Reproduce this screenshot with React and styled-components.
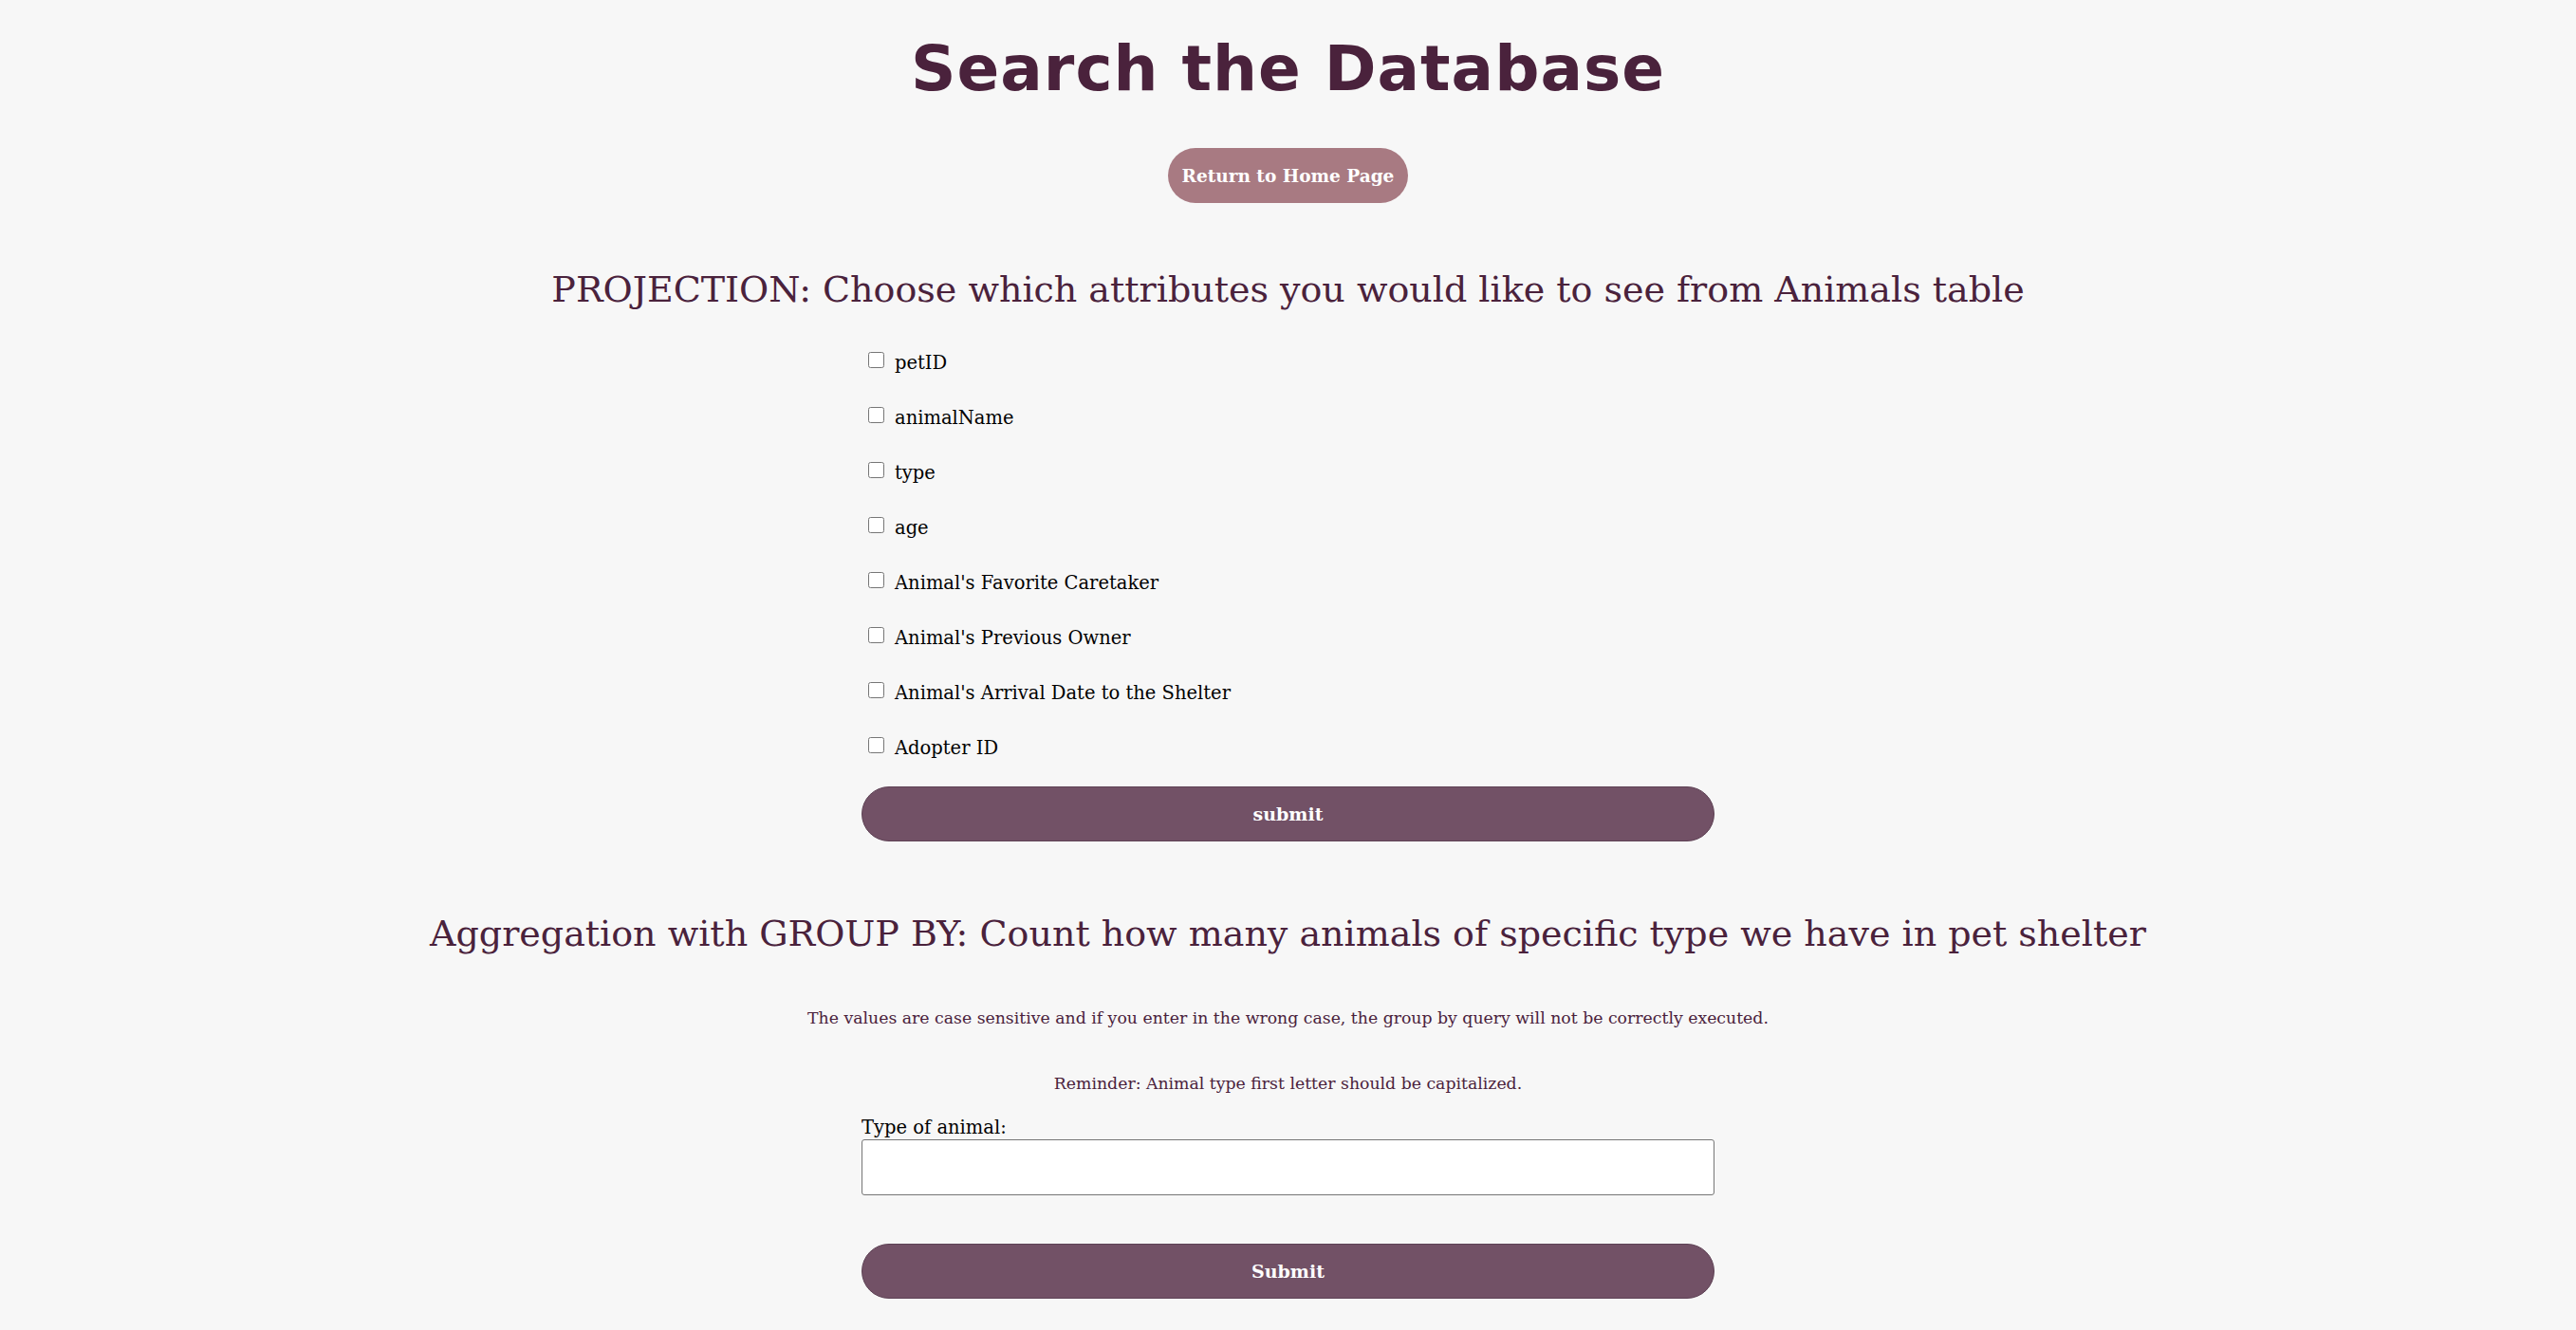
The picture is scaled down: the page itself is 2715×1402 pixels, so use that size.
import styled, { createGlobalStyle } from "styled-components";

const GlobalStyle = createGlobalStyle`
    body {
        margin: 0;
        background-color: #f7f7f7;
        font-family: "DejaVu Serif", "Liberation Serif", serif;
    }
`;

const PageStyle = styled.main`
    display: flex;
    flex-direction: column;
    align-items: center;
    padding-top: 33px;
    padding-bottom: 40px;
`;

const TitleStyle = styled.h1`
    margin: 0;
    font-family: "DejaVu Sans", "Liberation Sans", sans-serif;
    font-weight: 900;
    font-size: 66px;
    line-height: 80px;
    color: #4a223c;
    letter-spacing: 1px;
`;

const HomeButtonStyle = styled.button`
    margin-top: 43px;
    height: 58px;
    padding: 0 15px;
    border: none;
    border-radius: 29px;
    background-color: #a87a82;
    color: white;
    font-family: "DejaVu Serif", serif;
    font-weight: bold;
    font-size: 18.5px;
`;

const SectionTitleStyle = styled.h2`
    margin: ${(props) => props.$top}px 0 0;
    font-weight: normal;
    font-size: 38px;
    line-height: 48px;
    color: #4a223c;
`;

const FormStyle = styled.form`
    width: 899px;
    display: flex;
    flex-direction: column;
    margin-top: ${(props) => props.$top}px;
`;

const CheckRowStyle = styled.label`
    display: flex;
    align-items: center;
    gap: 11px;
    height: 58px;
    padding-left: 7px;
    font-size: 19.5px;
    color: #000;
`;

const CheckBoxStyle = styled.input`
    width: 17px;
    height: 17px;
    margin: 0 0 6px;
`;

const SubmitStyle = styled.button`
    height: 58px;
    margin-top: ${(props) => props.$top}px;
    border: 1px solid #5e4255;
    border-radius: 29px;
    background-color: #725166;
    color: white;
    font-family: "DejaVu Serif", serif;
    font-weight: bold;
    font-size: 19px;
`;

const NoteStyle = styled.p`
    margin: ${(props) => props.$top}px 0 0;
    font-size: 17.3px;
    line-height: 24px;
    color: #4a223c;
`;

const FieldLabelStyle = styled.label`
    font-size: 19.5px;
    line-height: 24px;
    color: #000;
`;

const TextInputStyle = styled.input`
    height: 59px;
    box-sizing: border-box;
    border: 1px solid #767676;
    border-radius: 3px;
    background: white;
    font-size: 20px;
`;

const attributes = [
    "petID",
    "animalName",
    "type",
    "age",
    "Animal's Favorite Caretaker",
    "Animal's Previous Owner",
    "Animal's Arrival Date to the Shelter",
    "Adopter ID",
];

function App() {
    return (
        <>
            <GlobalStyle />
            <PageStyle>
                <TitleStyle>Search the Database</TitleStyle>
                <HomeButtonStyle>Return to Home Page</HomeButtonStyle>

                <SectionTitleStyle $top={67}>
                    PROJECTION: Choose which attributes you would like to see from Animals table
                </SectionTitleStyle>
                <FormStyle $top={24}>
                    {attributes.map((name) => (
                        <CheckRowStyle key={name}>
                            <CheckBoxStyle type="checkbox" />
                            {name}
                        </CheckRowStyle>
                    ))}
                    <SubmitStyle $top={12}>submit</SubmitStyle>
                </FormStyle>

                <SectionTitleStyle $top={73}>
                    Aggregation with GROUP BY: Count how many animals of specific type we have in pet shelter
                </SectionTitleStyle>
                <NoteStyle $top={53}>
                    The values are case sensitive and if you enter in the wrong case, the group by query will not be correctly executed.
                </NoteStyle>
                <NoteStyle $top={45}>
                    Reminder: Animal type first letter should be capitalized.
                </NoteStyle>
                <FormStyle $top={23}>
                    <FieldLabelStyle htmlFor="animalType">Type of animal:</FieldLabelStyle>
                    <TextInputStyle id="animalType" type="text" />
                    <SubmitStyle $top={51}>Submit</SubmitStyle>
                </FormStyle>
            </PageStyle>
        </>
    );
}

export default App;
